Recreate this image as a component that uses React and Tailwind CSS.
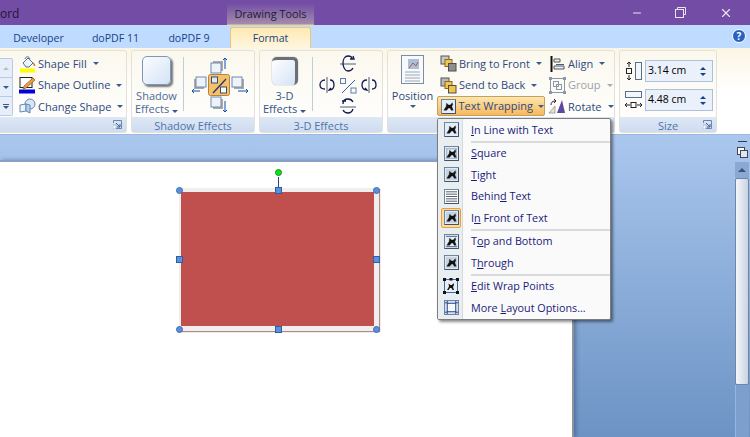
import { Minus, X } from "lucide-react";

const font = { fontFamily: '"Open Sans", "Noto Sans", sans-serif' };

function Caret({ className = "border-t-[#3b5a8c]" }) {
  return <span className={`inline-block w-0 h-0 border-x-[3px] border-x-transparent border-t-[3px] ${className}`} />;
}

function Launcher() {
  return (
    <svg width="9" height="9" viewBox="0 0 9 9" className="absolute right-[4px] bottom-[3px]">
      <path d="M.5 3V.5h8v8H3" fill="none" stroke="#6a86ad" />
      <path d="M3 3l4 4M7 4v3H4" fill="none" stroke="#3a5f96" />
      <rect x="0" y="5" width="3" height="4" fill="#fff" stroke="#7d97bb" strokeWidth=".6" />
    </svg>
  );
}

// ribbon group box, label band at the bottom
function Group({ label, className, launcher, children }) {
  return (
    <div className={`relative h-[83px] flex flex-col border border-[#e4e2d8] bg-gradient-to-b from-[#fbf8ee] to-white shrink-0 ${className}`}>
      <div className="flex-1 min-h-0">{children}</div>
      <div className="h-[15px] bg-gradient-to-b from-[#dde8f6] to-[#cfdcef] text-[11px] leading-[17px] text-center text-[#4f74ab]">
        {label}
      </div>
      {launcher && <Launcher />}
    </div>
  );
}

function Pail() {
  return (
    <svg width="16" height="18" viewBox="0 0 16 18">
      <path d="M3 8l5-5 5 5-4 4H6z" fill="#eef3f8" stroke="#4f6f96" />
      <path d="M5 4c1-3 4-3 5 0" fill="none" stroke="#4f6f96" />
      <path d="M13 8c1 1 2 2 1.500 3" fill="none" stroke="#c07b2c" strokeWidth="1.500" />
      <rect x="0" y="13.500" width="15" height="4" fill="#ffff00" />
    </svg>
  );
}

function Pencil() {
  return (
    <svg width="17" height="18" viewBox="0 0 17 18">
      <rect x="1" y="1.500" width="12" height="10" fill="#fff" stroke="#222" />
      <path d="M5 10l9-8 2 2-9 8-3 1z" fill="#e8a33a" stroke="#9a5b20" strokeWidth=".8" />
      <rect x="0" y="13.500" width="16" height="4" fill="#0000dd" />
    </svg>
  );
}

function ChangeShape() {
  return (
    <svg width="17" height="17" viewBox="0 0 17 17">
      <circle cx="11" cy="6" r="5" fill="#d7e6f6" stroke="#6487b3" />
      <path d="M1 7l6-1v7l-6 1z" fill="#eef4fb" stroke="#6487b3" />
      <path d="M7 6l4 1v8l-4-2z" fill="#b7cfea" stroke="#6487b3" />
    </svg>
  );
}

function Layers({ flip }) {
  return (
    <svg width="17" height="17" viewBox="0 0 17 17">
      <rect x="1" y="1" width="8" height="8" fill={flip ? "#b9b9b9" : "#c9c9c9"} stroke="#555" />
      <rect x="5" y="4.500" width="7" height="7" fill="#f3c74f" stroke="#8a6a1f" />
      <rect x="8.500" y="8.500" width="7.500" height="7.500" fill={flip ? "#f0c34a" : "#8f8f8f"} stroke="#4c4c4c" />
    </svg>
  );
}

function AlignIcon() {
  return (
    <svg width="16" height="16" viewBox="0 0 16 16">
      <path d="M1.500 0v16" stroke="#111" strokeWidth="2" />
      <path d="M4 3h6v3H4zM4 10h10v3H4z" fill="#f0f0f0" stroke="#555" />
      <path d="M6 8.500h8" stroke="#3a5f96" />
    </svg>
  );
}

function GroupIcon() {
  return (
    <svg width="17" height="17" viewBox="0 0 17 17" fill="none" stroke="#8a97a8">
      <rect x="1.500" y="1.500" width="14" height="14" />
      <rect x="4.500" y="4.500" width="5" height="5" />
      <rect x="7.500" y="7.500" width="5" height="5" />
      <path d="M0 0h3v3H0zM14 0h3v3h-3zM0 14h3v3H0zM14 14h3v3h-3z" fill="#8a97a8" stroke="none" />
    </svg>
  );
}

function RotateIcon() {
  return (
    <svg width="17" height="15" viewBox="0 0 17 15" className="-ml-[3px]">
      <path d="M9 14l5-13 3 13z" fill="#5c4a9c" />
      <path d="M1 14l6-7v7z" fill="#e9e4c8" stroke="#888" strokeWidth=".7" />
      <path d="M3 6c0-2 1-4 4-4M6 0l2 2-2 2" fill="none" stroke="#223" />
    </svg>
  );
}

function Row({ icon, label, disabled }) {
  return (
    <div className="flex items-center h-[21.5px]">
      <span className="w-[19px] flex items-center justify-center shrink-0">{icon}</span>
      <span className={`ml-[1px] text-[11px] whitespace-nowrap ${disabled ? "text-[#9aa3ad]" : "text-[#2c4a80]"}`}>{label}</span>
      <span className="ml-[6px] flex"><Caret className={disabled ? "border-t-[#a5adb8]" : "border-t-[#3b5a8c]"} /></span>
    </div>
  );
}

// little dog figure used on every wrap icon, kind sets the surrounding lines
function WrapIcon({ kind = "inline", size = 15 }) {
  return (
    <svg width={size} height={size} viewBox="0 0 16 16">
      <rect x=".5" y=".5" width="15" height="15" fill={kind === "behind" ? "#fff" : "#e4edf7"} stroke="#6b7f99" />
      <path d="M1 15.500h14.500V1" fill="none" stroke="#3f4d60" />
      {kind === "square" && <path d="M2 3h12M2 13h12M3 3v10M13 3v10" stroke="#8da2bd" />}
      {kind === "through" && <rect x="2" y="2" width="12" height="12" fill="#c4d2e2" />}
      {kind === "top" && <path d="M2 2.500h12M2 13.500h12" stroke="#48617f" />}
      {kind === "behind" ? (
        <path d="M2 3h12M2 5.500h12M2 8h12M2 10.500h12M2 13h12" stroke="#4b5563" />
      ) : (
        <path d="M3 12l2.500-4 .5-3.500 2 2h2l2-2.500.5 2-1 2 1.500 4h-2l-1.500-2.500h-1.500l-2 2.500z" fill="#111" stroke="#111" strokeWidth=".4" />
      )}
    </svg>
  );
}

function EditPointsIcon() {
  return (
    <svg width="16" height="16" viewBox="0 0 16 16">
      <rect x="1.500" y="1.500" width="13" height="13" fill="none" stroke="#4068b0" />
      <path d="M0 0h3v3H0zM13 0h3v3h-3zM0 13h3v3H0zM13 13h3v3h-3zM6.500 0h3v2.500h-3z" fill="#111" />
      <path d="M4 12l2-3.500-.5-3 2 1.500h1.500l1.500-2 .5 2-1 2 1 3h-1.500l-1-2h-1.500l-1.500 2z" fill="#111" />
    </svg>
  );
}

function MoreLayoutIcon() {
  return (
    <svg width="15" height="15" viewBox="0 0 16 16" fill="none">
      <rect x=".5" y=".5" width="15" height="15" fill="#d3e1f2" stroke="#6b7f99" />
      <rect x="3.500" y="3.500" width="9" height="9" fill="#f7fafd" stroke="#27408b" />
      <path d="M1 3h2.500V1M15 3h-2.500V1M1 13h2.500v2M15 13h-2.500v2" stroke="#27408b" />
    </svg>
  );
}

function MenuItem({ kind, icon, active, children }) {
  return (
    <div className="flex items-center h-[21.5px]">
      <span className="w-[26px] flex justify-center shrink-0">
        <span className={`w-[20px] h-[20px] flex items-center justify-center ${active ? "bg-[#fbdca0] border border-[#ef9d34] rounded-[2px]" : ""}`}>
          {icon || <WrapIcon kind={kind} />}
        </span>
      </span>
      <span className="ml-[7px] text-[10.800px] text-[#1b1b7a] whitespace-nowrap">{children}</span>
    </div>
  );
}

function Separator() {
  return <div className="h-[2px] ml-[33px] bg-[#d9dadb]" />;
}

function Spin({ value }) {
  return (
    <div className="flex items-center h-[22px] w-[68px] border border-[#abc1de] bg-[#eaf1fb] pl-[2px] pr-[6px]">
      <span className="text-[10.500px] text-black flex-1">{value}</span>
      <span className="flex flex-col gap-[3px]">
        <span className="w-0 h-0 border-x-[3px] border-x-transparent border-b-[3px] border-b-[#15428b]" />
        <span className="w-0 h-0 border-x-[3px] border-x-transparent border-t-[3px] border-t-[#15428b]" />
      </span>
    </div>
  );
}

function SquareHandle({ className }) {
  return <span className={`absolute w-[7px] h-[7px] bg-[#5b90e0] border border-[#2f5f9e] ${className}`} />;
}

function RoundHandle({ className }) {
  return <span className={`absolute w-[7px] h-[7px] rounded-full bg-[#5b90e0] border border-[#3f6ea8] ${className}`} />;
}

function ShadowEffectsIcons() {
  return (
    <svg width="58" height="58" viewBox="0 0 58 58" fill="none">
      <rect x="22" y="5" width="10" height="10" fill="#aaa" />
      <rect x="20" y="7" width="10" height="10" fill="#eef3fa" stroke="#6d8ab2" />
      <path d="M34 13V2m-2 2l2-2 2 2" stroke="#0f4fb0" />
      <rect x="3" y="23" width="10" height="10" fill="#aaa" />
      <rect x="5" y="21" width="10" height="10" fill="#eef3fa" stroke="#6d8ab2" />
      <path d="M1 35h8M3 33l-2 2 2 2" stroke="#0f4fb0" />
      <rect x="43" y="23" width="10" height="10" fill="#aaa" />
      <rect x="41" y="21" width="10" height="10" fill="#eef3fa" stroke="#6d8ab2" />
      <path d="M47 35h10m-2-2l2 2-2 2" stroke="#0f4fb0" />
      <rect x="22" y="43" width="10" height="10" fill="#aaa" />
      <rect x="20" y="41" width="10" height="10" fill="#eef3fa" stroke="#6d8ab2" />
      <path d="M34 45v11m-2-2l2 2 2-2" stroke="#0f4fb0" />
      <rect x="17.500" y="18.500" width="21" height="21" rx="2" fill="#f6bf69" stroke="#b5853c" />
      <rect x="20.500" y="21" width="6" height="6" fill="#dfe8f3" stroke="#33507a" />
      <rect x="29.500" y="31" width="6" height="6" fill="#fff" stroke="#33507a" />
      <path d="M22 37l13-14" stroke="#22386a" strokeWidth="1.300" />
    </svg>
  );
}

function TiltIcons() {
  return (
    <svg width="60" height="62" viewBox="0 0 60 62" fill="none" strokeWidth="1.300">
      {/* top */}
      <path d="M22 11h16" stroke="#8692a3" strokeWidth="1.500" />
      <path d="M30 3c-3 0-5 3-5 7s2 8 5 8c2 0 4-1 5-3M30 3c2 0 4 1 4 3m-2 0h4l-1-3" stroke="#111a55" />
      {/* bottom */}
      <path d="M22 54h16" stroke="#8692a3" strokeWidth="1.500" />
      <path d="M25 51c0-3 2-5 5-5 2 0 4 1 5 3M25 57c1 2 3 3 5 3s4-1 5-4M24 48h4" stroke="#111a55" />
      {/* left */}
      <path d="M9 24v16" stroke="#8692a3" strokeWidth="1.500" />
      <path d="M7 27c-3 0-5 2-5 5s2 4 5 4M12 27c3 0 4 2 4 5s-2 5-5 5l2-2" stroke="#111a55" />
      {/* right */}
      <path d="M51 24v16" stroke="#8692a3" strokeWidth="1.500" />
      <path d="M49 27c-3 0-5 2-5 5s2 5 5 5l-2-2M54 27c3 0 4 2 4 5s-2 4-4 4" stroke="#111a55" />
      {/* middle */}
      <rect x="22.500" y="25.500" width="5" height="5" stroke="#5a7fae" strokeWidth="1" />
      <rect x="33" y="35" width="5" height="5" stroke="#5a7fae" strokeWidth="1" />
      <path d="M24 40l13-13" stroke="#2e5ea8" strokeWidth="1" />
    </svg>
  );
}

export default function App() {
  return (
    <div style={font} className="w-[750px] h-[437px] overflow-hidden flex flex-col relative bg-[#a5c1e8]">
      {/* title bar */}
      <div className="h-[25px] bg-[#734ca5] flex shrink-0">
        <span className="w-[227px] text-[12px] leading-[28px] text-[#1d1630]">ord</span>
        <div className="w-[87px] mt-[3px] bg-gradient-to-b from-[#734ca5] to-[#a48bab] border-b border-[#e0b060] text-[10.900px] leading-[22px] text-center text-[#23202c]">
          Drawing Tools
        </div>
        <div className="ml-auto flex text-[#e8e4f0]">
          <span className="w-[43px] flex items-center justify-center"><Minus size={12} /></span>
          <span className="w-[44px] flex items-center justify-center">
            <svg width="11" height="11" viewBox="0 0 11 11" fill="none" stroke="currentColor">
              <path d="M2.500 2.500V.5h8v7H8.500" />
              <rect x=".5" y="2.500" width="8" height="8" />
            </svg>
          </span>
          <span className="w-[48px] flex items-center justify-center"><X size={14} /></span>
        </div>
      </div>

      {/* tabs */}
      <div className="h-[23px] bg-[#bfdbff] flex items-end shrink-0 relative text-[10.600px] text-[#15428b]">
        <span className="w-[77px] text-center leading-[20px]">Developer</span>
        <span className="w-[77px] text-center leading-[20px]">doPDF 11</span>
        <span className="w-[70px] text-center leading-[20px]">doPDF 9</span>
        <span className="ml-[6px] w-[81px] h-[21px] text-center leading-[20px] rounded-t-[3px] border border-b-0 border-[#e9c779] bg-gradient-to-b from-[#ffe9b0] to-[#fdf6e0] text-[#1f3f78]">
          Format
        </span>
        <span className="absolute right-[4px] top-[4px] w-[14px] h-[14px] rounded-full bg-[#2a62c0] border border-white text-white text-[10px] leading-[12px] font-bold text-center">?</span>
      </div>

      {/* ribbon */}
      <div className="h-[87px] flex gap-[4px] pt-[2px] shrink-0 bg-gradient-to-b from-[#fbf6e4] via-white to-white border-b border-[#9db8de]">
        <Group label="" launcher className="w-[127px] rounded-r-[3px] border-l-0">
          <div className="flex h-full">
            <div className="w-[13px] mt-[7px] h-[58px] flex flex-col border border-l-0 border-[#b5cbe6] rounded-r-[2px] bg-[#e6eef9]">
              <span className="flex-1 flex items-center justify-center border-b border-[#b5cbe6]"><span className="w-0 h-0 border-x-[3px] border-x-transparent border-b-[3px] border-b-[#b6c0cc]" /></span>
              <span className="flex-1 flex items-center justify-center border-b border-[#b5cbe6]"><Caret /></span>
              <span className="flex-1 flex flex-col items-center justify-center gap-[1px]"><span className="w-[6px] h-px bg-[#3b5a8c]" /><Caret /></span>
            </div>
            <div className="ml-[5px] pt-[2px]">
              <Row icon={<Pail />} label="Shape Fill" />
              <Row icon={<Pencil />} label="Shape Outline" />
              <Row icon={<ChangeShape />} label="Change Shape" />
            </div>
          </div>
        </Group>

        <Group label="Shadow Effects" className="w-[124px] rounded-[3px]">
          <div className="flex h-full">
            <div className="w-[51px] pr-[2px] flex flex-col items-center pt-[5px]">
              <span className="w-[29px] h-[29px] rounded-[5px] bg-gradient-to-br from-[#fbfdff] to-[#d4e3f6] border border-[#7d97ba] shadow-[2px_2px_2px_#777]" />
              <span className="mt-[5px] text-[11px] leading-[12.500px] text-center text-[#4b6a99]">Shadow<br />Effects <Caret /></span>
            </div>
            <div className="w-px my-[6px] h-[54px] bg-[#bfccdc]" />
            <div className="ml-[7px] pt-[5px]"><ShadowEffectsIcons /></div>
          </div>
        </Group>

        <Group label="3-D Effects" className="w-[124px] rounded-[3px]">
          <div className="flex h-full">
            <div className="w-[52px] pr-[3px] flex flex-col items-center pt-[6px]">
              <span className="w-[26px] h-[28px] rounded-[5px] bg-gradient-to-br from-white to-[#d4e3f6] border-t-[3px] border-r-[3px] border-[#6b6f75] shadow-[0_0_1px_#555]" />
              <span className="mt-[5px] text-[11px] leading-[12.500px] text-center text-[#33548c]">3-D<br />Effects <Caret /></span>
            </div>
            <div className="w-px my-[6px] h-[54px] bg-[#bfccdc]" />
            <div className="ml-[5px] pt-[2px]"><TiltIcons /></div>
          </div>
        </Group>

        <Group label="" className="w-[228px] rounded-[3px]">
          <div className="flex h-full">
            <div className="w-[49px] flex flex-col items-center pt-[4px]">
              <svg width="23" height="29" viewBox="0 0 23 29">
                <rect x=".5" y=".5" width="22" height="28" fill="#f7f9fc" stroke="#7d8ca0" />
                <rect x="7" y="4" width="11" height="10" fill="#a9c0dc" />
                <path d="M8 13l4-5 3 3 2-4" stroke="#c2562f" fill="none" />
                <path d="M4 17h15M4 20h15M4 23h15M4 26h15" stroke="#9aa7b8" />
              </svg>
              <span className="text-[11px] leading-[13px] mt-[5px] text-[#2c4a80]">Position</span>
              <span className="mt-[3px] flex"><Caret /></span>
            </div>
            <div className="pt-[2px] ml-[2px]">
              <Row icon={<Layers />} label="Bring to Front" />
              <Row icon={<Layers flip />} label="Send to Back" />
              <div className="flex items-center w-[108px] h-[20px] -ml-[2px] pl-[3px] rounded-[2px] border border-[#c2a060] bg-gradient-to-b from-[#fde6ad] to-[#f8b85a]">
                <span className="w-[16px] h-[16px] flex items-center justify-center mr-[2px]"><WrapIcon kind="inline" /></span>
                <span className="text-[11px] whitespace-nowrap text-[#2c4a80]">Text Wrapping</span>
                <span className="ml-[5px] flex"><Caret /></span>
              </div>
            </div>
            <div className="pt-[2px] ml-auto mr-[3px] w-[63px]">
              <Row icon={<AlignIcon />} label="Align" />
              <Row icon={<GroupIcon />} label="Group" disabled />
              <Row icon={<RotateIcon />} label="Rotate" />
            </div>
          </div>
        </Group>

        <Group label="Size" launcher className="w-[98px] rounded-[3px]">
          <div className="flex flex-col gap-[7px] pt-[9px] pl-[5px]">
            <div className="flex items-center gap-[3px]">
              <svg width="17" height="18" viewBox="0 0 17 18" fill="none" stroke="#222">
                <rect x="10.500" y=".5" width="6" height="17" fill="#f3f7fc" stroke="#55708f" />
                <path d="M4 0v5M2 2l2-2 2 2M4 13v5M2 16l2 2 2-2" />
                <rect x="1.500" y="6.500" width="5" height="5" />
              </svg>
              <Spin value="3.14 cm" />
            </div>
            <div className="flex items-center gap-[3px]">
              <svg width="17" height="18" viewBox="0 0 17 18" fill="none" stroke="#222">
                <rect x=".5" y=".5" width="16" height="6" fill="#f3f7fc" stroke="#55708f" />
                <path d="M0 14h5M2 12l-2 2 2 2M12 14h5M15 12l2 2-2 2" />
                <rect x="6" y="11.500" width="5" height="5" />
              </svg>
              <Spin value="4.48 cm" />
            </div>
          </div>
        </Group>
      </div>

      {/* document area */}
      <div className="flex-1 min-h-0 flex bg-gradient-to-b from-[#aac7ee] to-[#6c93c4]">
        <div className="w-[574px] mt-[25px] bg-white border-t-2 border-t-[#8aa0c8] border-r-2 border-r-[#8d929b] relative shadow-[2px_0_4px_rgba(40,60,100,.45)]">
          <div className="absolute left-[179px] top-[26px] w-[200px] h-[143px] border-l-2 border-r-[5px] border-t-4 border-b-[5px] border-[#f1eeee] shadow-[1px_1px_1px_#b08a8a]">
            <div className="w-full h-full bg-[#c0504d]" />
          </div>
          <span className="absolute left-[278px] top-[15px] w-px h-[14px] bg-[#1f4f90]" />
          <span className="absolute left-[275px] top-[7px] w-[7px] h-[7px] rounded-full bg-[#00ee00] border border-[#2c7a4a]" />
          <RoundHandle className="left-[176px] top-[25px]" />
          <SquareHandle className="left-[275px] top-[25px]" />
          <RoundHandle className="left-[373px] top-[25px]" />
          <SquareHandle className="left-[176px] top-[94px]" />
          <SquareHandle className="left-[373px] top-[94px]" />
          <RoundHandle className="left-[176px] top-[164px]" />
          <SquareHandle className="left-[275px] top-[164px]" />
          <RoundHandle className="left-[373px] top-[164px]" />
        </div>
        <div className="ml-auto w-[14px] mr-px flex flex-col items-center">
          <span className="mt-[6px] w-[9px] h-px bg-[#333b55]" />
          <svg width="11" height="11" viewBox="0 0 11 11" className="mt-[5px]">
            <rect x=".5" y=".5" width="7" height="7" fill="#fff" stroke="#445" />
            <rect x="3.500" y="3.500" width="7" height="7" fill="#dfe6f2" stroke="#445" />
          </svg>
          <div className="mt-[4px] w-[14px] h-[16px] bg-[#8aa8d6] flex items-center justify-center">
            <span className="w-0 h-0 border-x-[4px] border-x-transparent border-b-[4px] border-b-[#45506f]" />
          </div>
          <div className="w-[14px] h-[207px] border border-[#6f86ab] rounded-[2px] bg-gradient-to-r from-[#f4f6f9] to-[#c9d3e2]" />
          <div className="w-[14px] flex-1 border-l border-[#96b6e2] bg-[#7c9fce]" />
        </div>
      </div>

      {/* wrap menu */}
      <div className="absolute left-[437px] top-[118px] w-[174px] h-[202px] border border-[#7d7d7d] rounded-[2px] bg-[#fafafa] shadow-[2px_2px_3px_rgba(0,0,0,.45)]">
        <span className="absolute left-0 top-0 bottom-0 w-[25px] bg-[#e9eef0] border-r border-[#d6dadc]" />
        <div className="relative">
          <MenuItem kind="inline"><u>I</u>n Line with Text</MenuItem>
          <Separator />
          <MenuItem kind="square"><u>S</u>quare</MenuItem>
          <MenuItem kind="through"><u>T</u>ight</MenuItem>
          <MenuItem kind="behind">Behin<u>d</u> Text</MenuItem>
          <MenuItem kind="through" active>I<u>n</u> Front of Text</MenuItem>
          <Separator />
          <MenuItem kind="top">T<u>o</u>p and Bottom</MenuItem>
          <MenuItem kind="through">T<u>h</u>rough</MenuItem>
          <Separator />
          <MenuItem icon={<EditPointsIcon />}><u>E</u>dit Wrap Points</MenuItem>
          <MenuItem icon={<MoreLayoutIcon />}>More <u>L</u>ayout Options...</MenuItem>
        </div>
      </div>
    </div>
  );
}
